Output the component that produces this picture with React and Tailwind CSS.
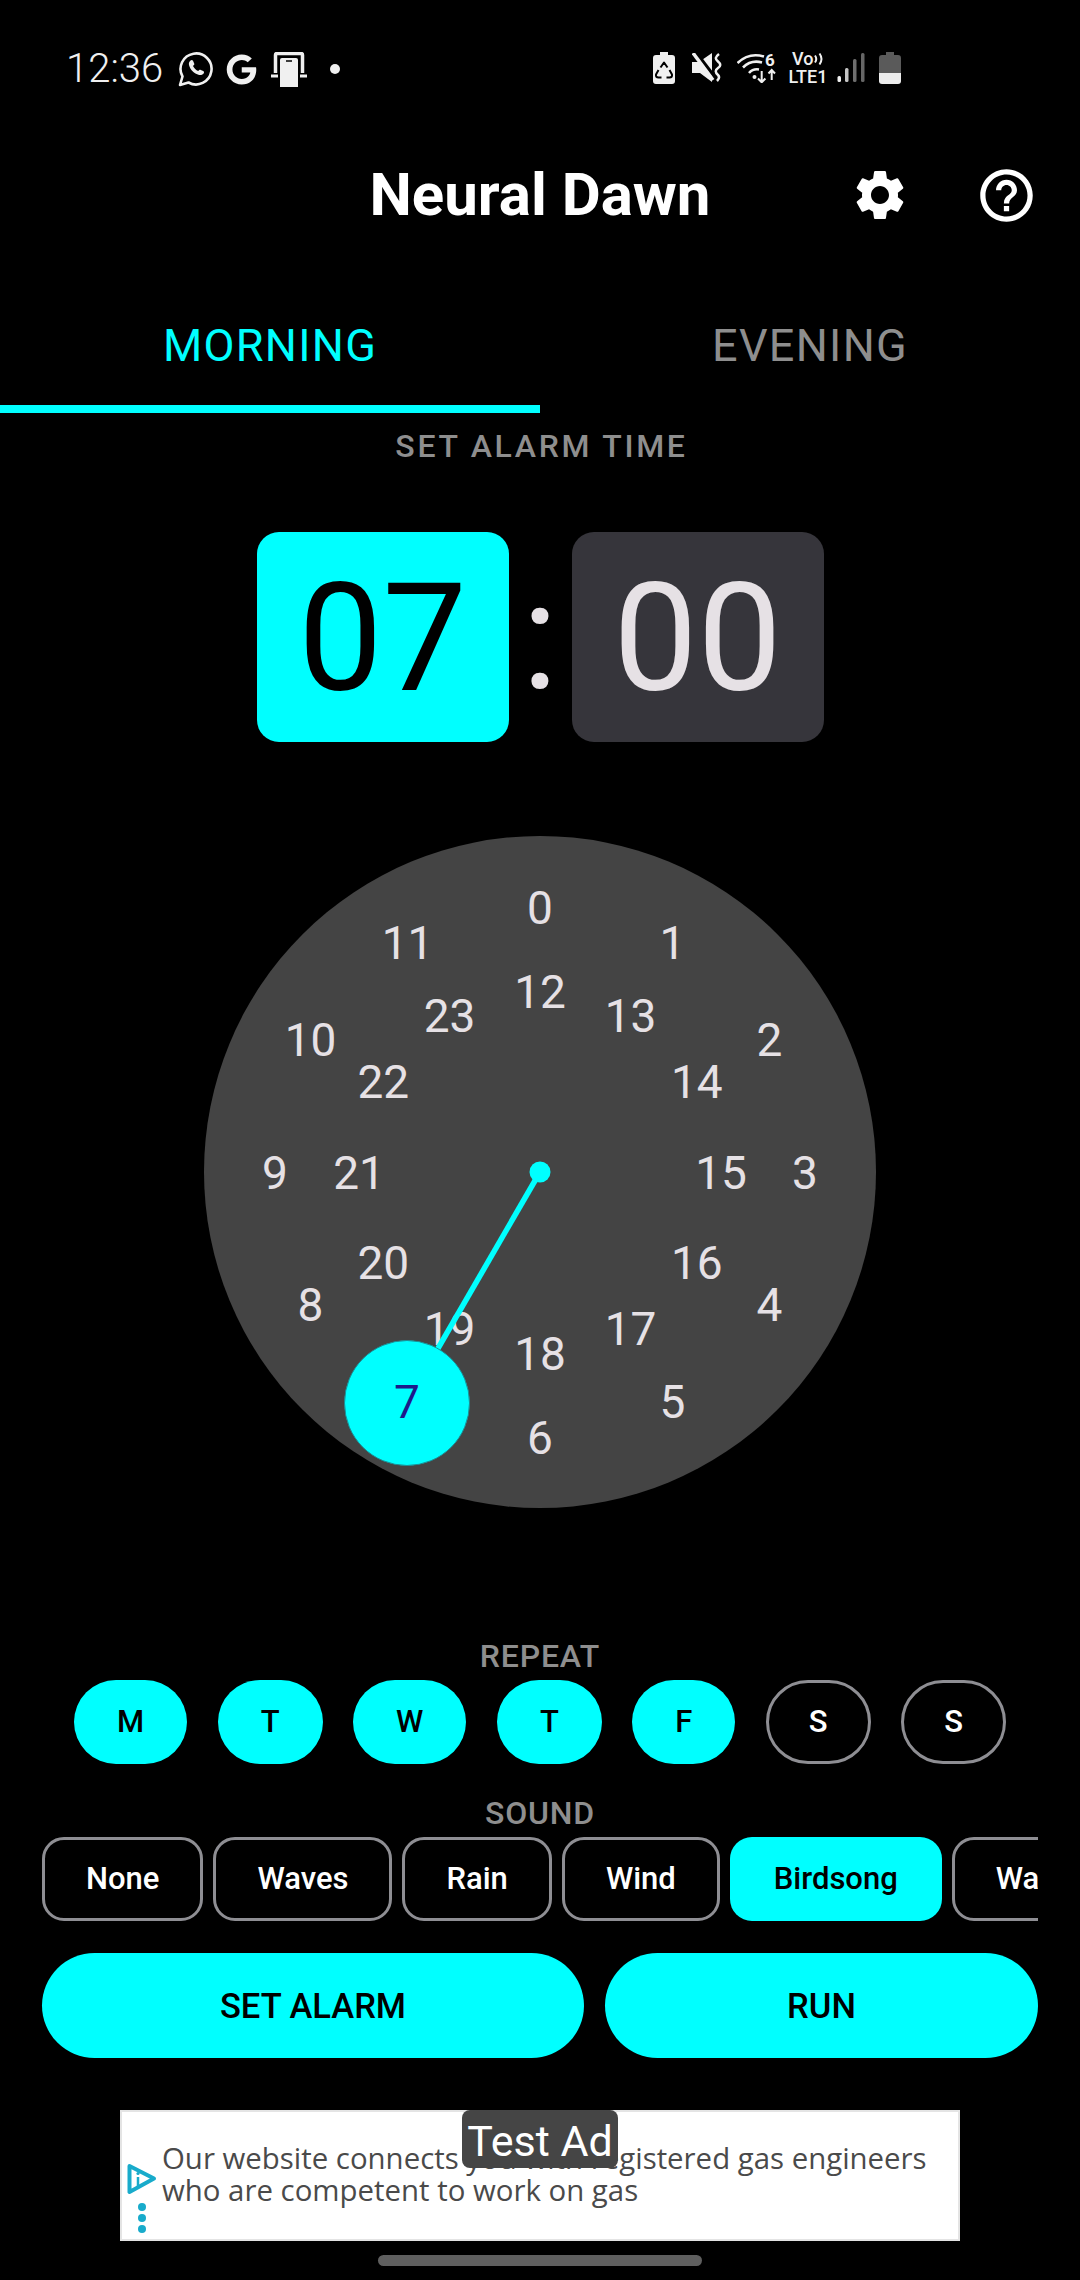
import React from 'react';
import { FaGoogle } from 'react-icons/fa';
import { MdSettings, MdHelpOutline } from 'react-icons/md';

const DAYS = [
  { label: 'M', on: true },
  { label: 'T', on: true },
  { label: 'W', on: true },
  { label: 'T', on: true },
  { label: 'F', on: true },
  { label: 'S', on: false },
  { label: 'S', on: false },
];

const SOUNDS = ['None', 'Waves', 'Rain', 'Wind', 'Birdsong', 'Water'];

// hour marks around the dial: outer ring 0-11, inner ring 12-23
const MARKS = [];
for (let i = 0; i < 12; i++) {
  const a = (i * Math.PI) / 6;
  if (i !== 7) MARKS.push({ n: i, x: 336 + 265 * Math.sin(a), y: 336.5 - 265 * Math.cos(a) });
  MARKS.push({ n: i + 12, x: 336 + 181 * Math.sin(a), y: 336.5 - 181 * Math.cos(a) });
}

function WhatsappIcon() {
  return (
    <svg width="35" height="36" viewBox="0 0 35 36" fill="none" className="mr-[13px]">
      <path d="M2 34L4.500 25.500A15.500 15.500 0 1 1 10.500 31.500Z" stroke="#f0f0f0" strokeWidth="2.600" strokeLinejoin="round" />
      <path d="M12.500 9.500C13.300 8.700 14.500 8.800 15 9.800L16.200 12.400C16.500 13 16.300 13.600 15.900 14L15 15C16.100 17.200 18 19 20.200 20.100L21.200 19.100C21.600 18.700 22.200 18.600 22.800 18.900L25.200 20.100C26.200 20.600 26.300 21.800 25.600 22.600C24.500 23.900 22.800 24.400 21.100 23.900C16 22.500 12.300 18.800 11 13.900C10.600 12.300 11.200 10.700 12.500 9.500Z" fill="#f0f0f0" />
    </svg>
  );
}

function LinkIcon() {
  return (
    <svg width="36" height="35" viewBox="0 0 36 35" fill="none">
      <path d="M4.500 21V3A1.500 1.500 0 0 1 6 1.500H30A1.500 1.500 0 0 1 31.500 3V21" stroke="#f0f0f0" strokeWidth="3.500" />
      <path d="M0 24H8M27 24H36" stroke="#f0f0f0" strokeWidth="2.800" />
      <path d="M7 35V7A3 3 0 0 1 10 4H26A3 3 0 0 1 29 7V35" fill="#000" />
      <path d="M9 35V8A2 2 0 0 1 11 6H25A2 2 0 0 1 27 8V35Z" fill="#f0f0f0" />
      <path d="M15 9H21" stroke="#000" strokeWidth="1.500" />
    </svg>
  );
}

function RecycleBattery() {
  return (
    <svg width="22" height="32" viewBox="0 0 22 32" fill="none">
      <path d="M7 0H15V3H19A3 3 0 0 1 22 6V29A3 3 0 0 1 19 32H3A3 3 0 0 1 0 29V6A3 3 0 0 1 3 3H7Z" fill="#f0f0f0" />
      <path d="M7.500 15.500L11 10.500L14.500 15.500M16.500 18L19 22.500Q19.500 25.500 16.500 25.500H13.500M8.500 25.500H5.500Q2.500 25.500 3 22.500L5.500 18" stroke="#000" strokeWidth="2" strokeLinejoin="round" />
    </svg>
  );
}

function MuteVibrate() {
  return (
    <svg width="30" height="29" viewBox="0 0 30 29" fill="none">
      <path d="M0 9H7L20 0V29L8 20H0Z" fill="#f0f0f0" />
      <path d="M2 -3L25 27" stroke="#000" strokeWidth="3.500" />
      <path d="M1 0L21 27" stroke="#f0f0f0" strokeWidth="3.500" />
      <path d="M27 1C23 4 23 6 26 8.500C29 11 29 13 26 15C23 17 23 19.500 26 22C28 24 27 26 25 28" stroke="#f0f0f0" strokeWidth="2.500" />
    </svg>
  );
}

function WifiSix() {
  return (
    <svg width="40" height="30" viewBox="0 0 40 30" fill="none">
      <path d="M0.500 10Q12 -1 27 3.500" stroke="#f0f0f0" strokeWidth="2.600" />
      <path d="M6 14.500Q14 6.500 25 9.500" stroke="#f0f0f0" strokeWidth="2.600" />
      <path d="M12 20Q16 15.500 22 16.500" stroke="#f0f0f0" strokeWidth="2.600" />
      <circle cx="17.500" cy="24" r="2" fill="#f0f0f0" />
      <text x="28" y="12.500" fontSize="17" fontWeight="700" fill="#f0f0f0" fontFamily="Roboto, sans-serif">6</text>
      <path d="M24.700 18V29M21 25.500L24.700 29.300L28.400 25.500" stroke="#f0f0f0" strokeWidth="2" />
      <path d="M34.700 27V17M31.500 20.500L34.700 17L38 20.500" stroke="#f0f0f0" strokeWidth="2" />
    </svg>
  );
}

function SignalBars() {
  return (
    <svg width="28" height="30" viewBox="0 0 28 30">
      <rect x="0.500" y="23" width="3.500" height="6" rx="1.500" fill="#f0f0f0" />
      <rect x="8" y="15" width="3.500" height="14" rx="1.500" fill="#c4c4c4" />
      <rect x="16" y="6" width="3.500" height="23" rx="1.500" fill="#6e6e6e" />
      <rect x="24" y="0" width="3.500" height="29" rx="1.500" fill="#666" />
    </svg>
  );
}

function BatteryLow() {
  return (
    <svg width="22" height="32" viewBox="0 0 22 32">
      <path d="M7 0H15V3H19A3 3 0 0 1 22 6V21H0V6A3 3 0 0 1 3 3H7Z" fill="#5a5a5a" />
      <path d="M0 21H22V29A3 3 0 0 1 19 32H3A3 3 0 0 1 0 29Z" fill="#ececec" />
    </svg>
  );
}

function AdChoice() {
  return (
    <svg width="30" height="32" viewBox="0 0 30 32" fill="none">
      <path d="M2.500 3L27 15.500L2.500 29Z" stroke="#18abcb" strokeWidth="4" strokeLinejoin="round" />
      <path d="M11 14V23" stroke="#18abcb" strokeWidth="2.500" />
      <circle cx="11" cy="10.500" r="1.600" fill="#18abcb" />
    </svg>
  );
}

function Dial() {
  return (
    <div className="relative w-[672px] h-[672px] rounded-full bg-[#444444] shrink-0">
      {MARKS.map((m) => (
        <span
          key={m.n}
          className="absolute -translate-x-1/2 -translate-y-1/2 text-[46px] leading-none text-[#e6e1e5]"
          style={{ left: m.x, top: m.y }}
        >
          {m.n}
        </span>
      ))}
      <svg className="absolute inset-0" width="672" height="672" viewBox="0 0 672 672">
        <line x1="336" y1="336" x2="203" y2="566" stroke="#00ffff" strokeWidth="5.500" />
        <circle cx="336" cy="336" r="10.500" fill="#00ffff" />
      </svg>
      <div className="absolute left-[203px] top-[566.5px] -translate-x-1/2 -translate-y-1/2 w-[126px] h-[126px] rounded-full bg-[#00ffff] border border-[#1a8f96] flex items-center justify-center text-[46px] text-[#1d1a8a]">
        7
      </div>
    </div>
  );
}

export default function App() {
  return (
    <div className="w-[1080px] h-[2280px] bg-black flex flex-col font-['Roboto',sans-serif] overflow-hidden">
      {/* status bar */}
      <div className="h-[140px] pt-[51px] pl-[66px] pr-[179px] flex items-start justify-between text-[#f0f0f0]">
        <div className="flex items-center h-[36px]">
          <span className="text-[40px] leading-none font-light mr-[15px]">12:36</span>
          <WhatsappIcon />
          <FaGoogle size={31} className="mr-[14px]" />
          <LinkIcon />
          <span className="ml-[23px] w-[10px] h-[10px] rounded-full bg-[#f0f0f0]" />
        </div>
        <div className="flex items-center h-[33px]">
          <RecycleBattery />
          <div className="w-[17px]" />
          <MuteVibrate />
          <div className="w-[15px]" />
          <WifiSix />
          <div className="w-[12px]" />
          <div className="w-[38px] flex flex-col items-center text-[18px] leading-[18px] font-medium">
            <span className="flex items-center self-start pl-[3px]">
              Vo
              <svg width="11" height="14" viewBox="0 0 11 14" fill="none">
                <path d="M2 3.500Q4.500 7 2 10.500M6.500 1.500Q10.500 7 6.500 12.500" stroke="#f0f0f0" strokeWidth="2" />
              </svg>
            </span>
            <span>LTE1</span>
          </div>
          <div className="w-[10px]" />
          <SignalBars />
          <div className="w-[14px]" />
          <BatteryLow />
        </div>
      </div>

      {/* title row */}
      <div className="h-[110px] grid grid-cols-[1fr_auto_1fr] items-center text-white">
        <div />
        <h1 className="text-[60px] leading-none font-bold">Neural Dawn</h1>
        <div className="pr-[42px] flex items-center justify-end gap-[65px]">
          <MdSettings size={60} />
          <MdHelpOutline size={63} />
        </div>
      </div>

      {/* tabs */}
      <div className="mt-[30px] flex h-[133px]">
        <div className="w-1/2 pt-[40px] text-center text-[45px] leading-[52px] tracking-[1.3px] text-[#00ffff] border-b-[8px] border-[#00ffff]">MORNING</div>
        <div className="w-1/2 pt-[40px] text-center text-[45px] leading-[52px] tracking-[1.3px] text-[#8e8e8e]">EVENING</div>
      </div>

      <div className="mt-[13px] pl-[3px] text-center text-[32px] leading-[40px] font-medium tracking-[2.7px] text-[#8e8e8e]">SET ALARM TIME</div>

      {/* time */}
      <div className="mt-[66px] flex justify-center h-[210px]">
        <div className="w-[252px] pt-[3px] rounded-[22px] bg-[#00ffff] text-black text-[150px] leading-none flex items-center justify-center">07</div>
        <div className="w-[63px] text-[#e6e1e5] text-[150px] leading-none flex items-center justify-center">:</div>
        <div className="w-[252px] pt-[3px] rounded-[22px] bg-[#36353b] text-[#e6e1e5] text-[150px] leading-none flex items-center justify-center">00</div>
      </div>

      <div className="mt-[94px] flex justify-center">
        <Dial />
      </div>

      {/* repeat */}
      <div className="mt-[128px] text-center text-[32px] leading-[40px] font-medium tracking-[0.8px] text-[#8e8e8e]">REPEAT</div>
      <div className="mt-[4px] flex justify-center gap-[30.5px]">
        {DAYS.map((d, i) => (
          <div
            key={i}
            className={d.on
              ? 'h-[84px] px-[43px] rounded-full bg-[#00ffff] text-black text-[31px] font-medium flex items-center justify-center'
              : 'h-[84px] px-[40px] rounded-full border-[3px] border-[#8e8e93] text-white text-[31px] font-medium flex items-center justify-center'}
          >
            {d.label}
          </div>
        ))}
      </div>

      {/* sound */}
      <div className="mt-[29px] text-center text-[32px] leading-[40px] font-medium tracking-[0.8px] text-[#8e8e8e]">SOUND</div>
      <div className="mt-[4px] mx-[42px] flex gap-[10px] overflow-hidden">
        {SOUNDS.map((s) => (
          <div
            key={s}
            className={s === 'Birdsong'
              ? 'h-[84px] shrink-0 px-[44px] rounded-[22px] bg-[#00ffff] text-black text-[31px] font-medium flex items-center'
              : 'h-[84px] shrink-0 px-[41px] rounded-[22px] border-[3px] border-[#8e8e93] text-white text-[31px] font-medium flex items-center'}
          >
            {s}
          </div>
        ))}
      </div>

      {/* actions */}
      <div className="mt-[32px] mx-[42px] flex gap-[21px]">
        <button className="w-[542px] h-[105px] pt-[2px] rounded-full bg-[#00ffff] text-black text-[34.5px] font-medium">SET ALARM</button>
        <button className="flex-1 h-[105px] pt-[2px] rounded-full bg-[#00ffff] text-black text-[34.5px] font-medium">RUN</button>
      </div>

      {/* ad banner */}
      <div className="relative mt-[52px] mx-[120px] h-[131px] bg-white border-2 border-[#e4e4e4] flex">
        <div className="w-[40px] flex flex-col items-center justify-end pb-[6px] gap-[8px]">
          <AdChoice />
          <div className="flex flex-col gap-[3px]">
            <span className="block w-[8px] h-[8px] rounded-full bg-[#18abcb]" />
            <span className="block w-[8px] h-[8px] rounded-full bg-[#18abcb]" />
            <span className="block w-[8px] h-[8px] rounded-full bg-[#18abcb]" />
          </div>
        </div>
        <p className="self-center mb-[4px] font-['Open_Sans',sans-serif] text-[29.4px] leading-[32px] text-[#4a4a4a]">
          Our website connects you with registered gas engineers
          <br />
          who are competent to work on gas
        </p>
        <div className="absolute -top-[2px] left-[340px] w-[156px] h-[58px] pt-[3px] rounded-[8px] bg-[#454545] text-white text-[43px] leading-[56px] text-center">
          Test Ad
        </div>
      </div>

      <div className="mt-[14px] mx-auto w-[324px] h-[11px] rounded-full bg-[#5f5f5f]" />
    </div>
  );
}
